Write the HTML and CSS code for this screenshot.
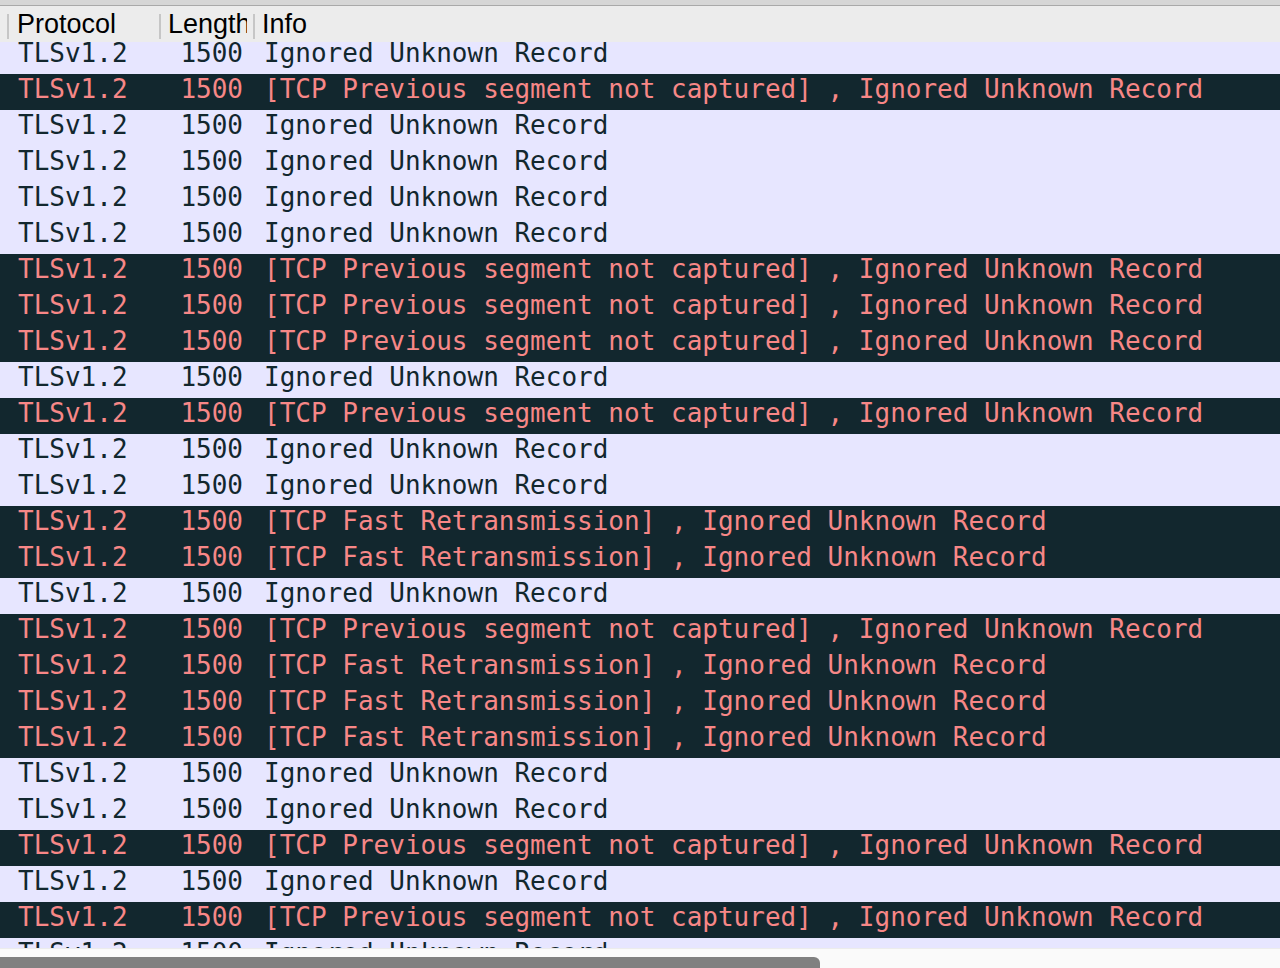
FILE: index.html
```html
<!DOCTYPE html>
<html lang="en">
<head>
    <meta charset="UTF-8">
    <title>Packet List</title>
    <link rel="stylesheet" href="styles.css">
</head>
<body>
    <div class="window">
        <div class="top-edge"></div>
        <div class="col-header">
            <div class="hcell"></div>
            <span class="sep"></span>
            <div class="hcell">Protocol</div>
            <span class="sep"></span>
            <div class="hcell">Length</div>
            <span class="sep"></span>
            <div class="hcell">Info</div>
        </div>

        <div class="list">
            <div class="rows" id="rows"></div>
        </div>

        <div class="hscroll">
            <div class="thumb"></div>
        </div>
    </div>

    <script>
        // i = ignored, p = previous segment, f = fast retransmission
        const pattern = 'ipiiiipppipiiffipfffiipipi';

        const infoText = {
            i: 'Ignored Unknown Record',
            p: '[TCP Previous segment not captured] , Ignored Unknown Record',
            f: '[TCP Fast Retransmission] , Ignored Unknown Record'
        };

        const rows = document.getElementById('rows');
        pattern.split('').forEach(function (kind) {
            const row = document.createElement('div');
            row.className = kind === 'i' ? 'row ok' : 'row bad';
            row.innerHTML =
                '<span class="cell"></span>' +
                '<span class="cell proto">TLSv1.2</span>' +
                '<span class="cell len">1500</span>' +
                '<span class="cell info">' + infoText[kind] + '</span>';
            rows.appendChild(row);
        });
    </script>
</body>
</html>
```

FILE: styles.css
```css
html, body {
    margin: 0;
    padding: 0;
    background-color: #fafafa;
}
.window {
    width: 1280px;
    height: 968px;
    display: flex;
    flex-direction: column;
    overflow: hidden;
}
.top-edge {
    height: 5px;
    background-color: #d6d6d6;
    border-bottom: 1px solid #a9a9a9;
    flex: none;
}
.col-header {
    height: 36px;
    flex: none;
    display: flex;
    align-items: center;
    background-color: #ececec;
    font-family: "Liberation Sans", Arial, sans-serif;
    font-size: 27px;
    line-height: 36px;
    color: #000;
}
.hcell {
    height: 36px;
    overflow: hidden;
    white-space: nowrap;
    padding-left: 8px;
    box-sizing: border-box;
}
.hcell:nth-child(1) { width: 7px; padding: 0; }
.hcell:nth-child(3) { width: 150px; }
.hcell:nth-child(5) { width: 86px; padding-left: 7px; margin-right: 6px; }
.hcell:nth-child(7) { flex: 1; padding-left: 7px; }
.sep {
    width: 2px;
    height: 25px;
    margin-top: 5px;
    background-color: #c6c6c6;
    flex: none;
}
.list {
    flex: 1;
    overflow: hidden;
    background-color: #e7e6ff;
}
.rows {
    margin-top: -4px;
}
.row {
    display: grid;
    grid-template-columns: 8px 152px 94px 1fr;
    height: 36px;
    font-family: "DejaVu Sans Mono", "Liberation Mono", monospace;
    font-size: 26px;
    line-height: 30px;
    white-space: nowrap;
}
.row.ok {
    background-color: #e7e6ff;
    color: #12272e;
}
.row.bad {
    background-color: #12272e;
    color: #f78787;
}
.cell {
    overflow: hidden;
}
.proto {
    padding-left: 10px;
}
.len {
    text-align: right;
    padding-right: 11px;
}
.info {
    padding-left: 10px;
}
.hscroll {
    height: 20px;
    flex: none;
    background-color: #fafafa;
    border-top: 1px solid #ececec;
    box-sizing: border-box;
    padding-top: 8px;
}
.thumb {
    width: 820px;
    height: 12px;
    background-color: #808080;
    border-radius: 0 6px 0 0;
}
```
